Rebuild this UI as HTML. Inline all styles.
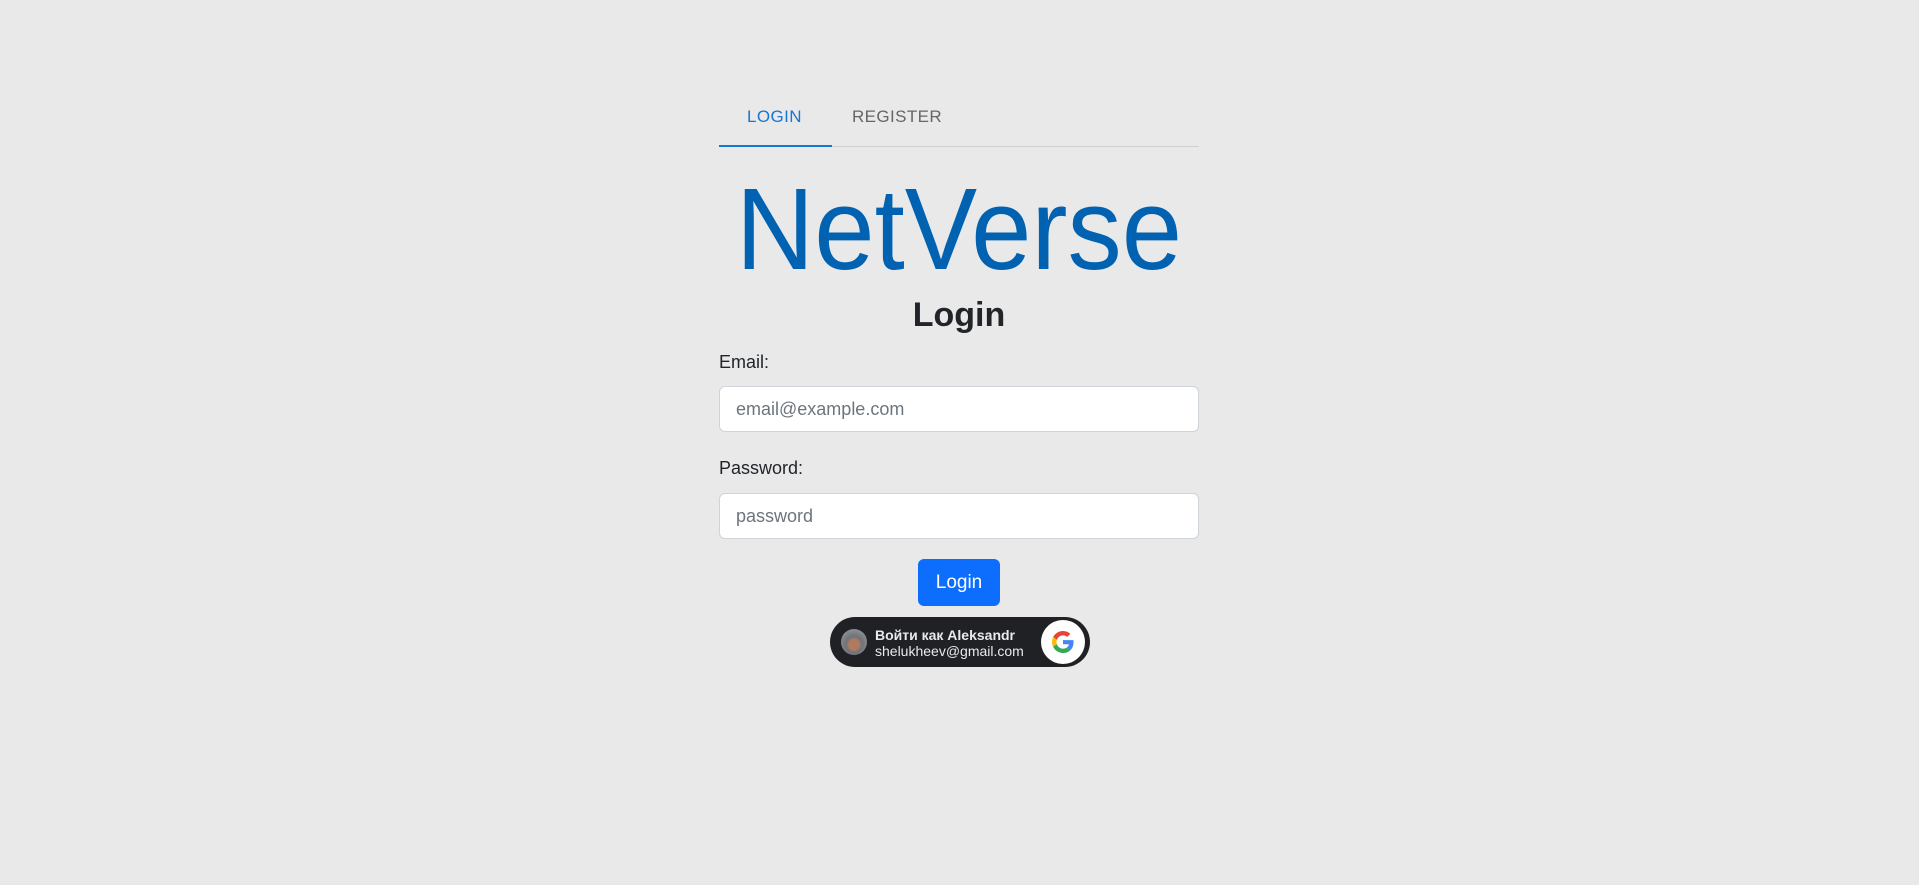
<!DOCTYPE html>
<html><head><meta charset="utf-8"><style>
*{box-sizing:border-box;margin:0;padding:0}
body{width:1919px;height:885px;background:#e9e9e9;font-family:"Liberation Sans",sans-serif;position:relative;overflow:hidden}
.abs{position:absolute}
.tabline{left:719px;top:146px;width:480px;height:1px;background:#cfcfcf}
.tabact{left:719px;top:145px;width:113px;height:2px;background:#1976d2}
.tab{top:107px;font-size:17px;letter-spacing:0.4px}
.logo{left:719px;width:480px;top:164px;text-align:center;font-size:116px;color:#0062b0;line-height:130px;transform:scaleX(0.935);}
.h{left:719px;width:480px;top:296px;text-align:center;font-size:34px;font-weight:bold;color:#212529}
.lbl{left:719px;font-size:18px;color:#212529}
.inp{left:719px;width:480px;height:46px;background:#fff;border:1px solid #ced4da;border-radius:6px;font-size:18px;color:#6c757d;padding:12px 16px}
.btn{left:918px;top:559px;width:82px;height:47px;background:#0d6efd;border-radius:6px;color:#fff;font-size:19px;text-align:center;line-height:47px}
.pill{left:830px;top:617px;width:260px;height:50px;background:#202124;border-radius:25px}
</style></head><body>
<div class="abs tabline"></div><div class="abs tabact"></div>
<div class="abs tab" style="left:747px;color:#1976d2">LOGIN</div>
<div class="abs tab" style="left:852px;color:#666">REGISTER</div>
<div class="abs logo">NetVerse</div>
<div class="abs h">Login</div>
<div class="abs lbl" style="top:352px">Email:</div>
<div class="abs inp" style="top:386px">email@example.com</div>
<div class="abs lbl" style="top:458px">Password:</div>
<div class="abs inp" style="top:493px">password</div>
<div class="abs btn">Login</div>
<div class="abs pill">
 <div class="abs" style="left:11px;top:12px;width:26px;height:26px;border-radius:50%;background:radial-gradient(circle at 50% 60%,#b07a60 0 25%,#6e7378 40%,#a0a4a8 100%)"></div>
 <div class="abs" style="left:45px;top:10px;color:#e8eaed;font-size:14px;font-weight:bold;line-height:16px">Войти как Aleksandr</div>
 <div class="abs" style="left:45px;top:26px;color:#e8eaed;font-size:14px;line-height:16px">shelukheev@gmail.com</div>
 <div class="abs" style="left:211px;top:3px;width:44px;height:44px;border-radius:50%;background:#fff">
  <svg class="abs" style="left:11px;top:11px" width="22" height="22" viewBox="0 0 48 48"><path fill="#EA4335" d="M24 9.5c3.54 0 6.71 1.22 9.21 3.6l6.85-6.85C35.9 2.38 30.47 0 24 0 14.62 0 6.51 5.38 2.56 13.22l7.98 6.19C12.43 13.72 17.74 9.5 24 9.5z"/><path fill="#4285F4" d="M46.98 24.55c0-1.57-.15-3.09-.38-4.55H24v9.02h12.94c-.58 2.96-2.26 5.48-4.78 7.18l7.73 6c4.51-4.18 7.09-10.36 7.090-17.65z"/><path fill="#FBBC05" d="M10.53 28.59c-.48-1.45-.76-2.99-.76-4.59s.27-3.14.76-4.59l-7.98-6.19C.92 16.46 0 20.12 0 24c0 3.88.92 7.54 2.56 10.78l7.97-6.19z"/><path fill="#34A853" d="M24 48c6.48 0 11.93-2.13 15.89-5.81l-7.73-6c-2.15 1.45-4.92 2.3-8.16 2.3-6.26 0-11.57-4.22-13.47-9.91l-7.98 6.19C6.51 42.62 14.62 48 24 48z"/></svg>
 </div>
</div>
</body></html>
